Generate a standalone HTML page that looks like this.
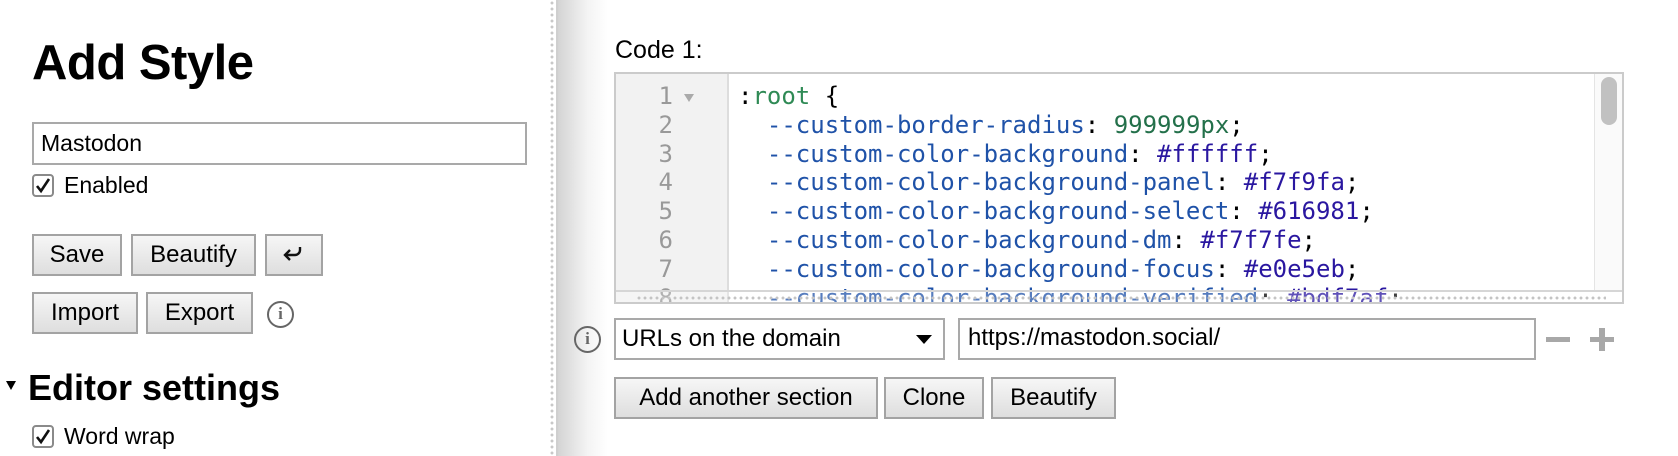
<!DOCTYPE html>
<html><head><meta charset="utf-8"><style>
*{box-sizing:border-box;margin:0;padding:0}
body{width:1678px;height:456px;overflow:hidden;background:#fff;font-family:"Liberation Sans",Arial,sans-serif;color:#000;position:relative}
.a{position:absolute}
.btn{position:absolute;border:2px solid #a3a3a3;background:linear-gradient(#f6f6f6,#dedede);font-size:24px;text-align:center;line-height:38px;white-space:nowrap}
.cb{position:absolute;width:22px;height:23px;border:2px solid #8a8a8a;border-radius:4px;background:#fff}
.lbl{position:absolute;font-size:23px;line-height:26px}
.info{position:absolute;border:2.5px solid #666;border-radius:50%;color:#666;font:bold 17px "Liberation Serif",serif;text-align:center}
.code{font-family:"DejaVu Sans Mono",monospace;font-size:24px;line-height:28.8px;white-space:pre}
.p{color:#1f52a8}.n{color:#23704a}.h{color:#2a17a0}.g{color:#2f8a55}
</style></head><body>
<div class="a" style="left:32px;top:35px;font-size:49px;font-weight:bold;letter-spacing:-0.5px">Add Style</div>
<div class="a" style="left:32px;top:122px;width:495px;height:43px;border:2px solid #a9a9a9;font-size:23px;line-height:38px;padding-left:7px">Mastodon</div>
<div class="cb" style="left:32px;top:174px"><svg width="18" height="19" viewBox="0 0 18 19"><path d="M3 10l4 5 8-12" stroke="#111" stroke-width="2.6" fill="none"/></svg></div>
<div class="lbl" style="left:64px;top:172px">Enabled</div>
<div class="btn" style="left:32px;top:234px;width:90px;height:42px">Save</div>
<div class="btn" style="left:131px;top:234px;width:125px;height:42px">Beautify</div>
<div class="btn" style="left:265px;top:234px;width:58px;height:42px"><svg width="26" height="20" viewBox="0 0 26 20" style="margin-top:8px"><path d="M19 3v3a5 5 0 0 1-5 5H5" stroke="#111" stroke-width="2.4" fill="none"/><path d="M9 6l-5 5 5 5" stroke="#111" stroke-width="2.4" fill="none"/></svg></div>
<div class="btn" style="left:32px;top:292px;width:106px;height:42px">Import</div>
<div class="btn" style="left:146px;top:292px;width:107px;height:42px">Export</div>
<div class="info" style="left:267px;top:301px;width:27px;height:27px;line-height:22px">i</div>
<div class="a" style="left:6px;top:381px;width:0;height:0;border-left:5.5px solid transparent;border-right:5.5px solid transparent;border-top:9px solid #000"></div>
<div class="a" style="left:28px;top:367px;font-size:36px;font-weight:bold">Editor settings</div>
<div class="cb" style="left:32px;top:425px"><svg width="18" height="19" viewBox="0 0 18 19"><path d="M3 10l4 5 8-12" stroke="#111" stroke-width="2.6" fill="none"/></svg></div>
<div class="lbl" style="left:64px;top:423px">Word wrap</div>
<!-- divider -->
<div class="a" style="left:550px;top:0;width:4px;height:456px;background:radial-gradient(circle,#c8c8c8 1.3px,transparent 1.6px) 0 0/4px 6px"></div>
<div class="a" style="left:556px;top:0;width:2px;height:456px;background:#cfcfcf"></div>
<div class="a" style="left:558px;top:0;width:50px;height:456px;background:linear-gradient(90deg,#d4d4d4,#f4f4f4 60%,#fff)"></div>
<!-- right -->
<div class="a" style="left:615px;top:36px;font-size:25px">Code 1:</div>
<div class="a" style="left:614px;top:72px;width:1010px;height:232px;border:2px solid #cbcbcb;overflow:hidden;background:#fff">
 <div class="a" style="left:0;top:0;width:113px;height:230px;background:#f2f2f2;border-right:2px solid #ddd"></div>
 <div class="a code" style="left:0;top:8px;width:57px;text-align:right;color:#999">1
2
3
4
5
6
7
8</div>
 <div class="a" style="left:68px;top:20px;width:0;height:0;border-left:5px solid transparent;border-right:5px solid transparent;border-top:8px solid #aaa"></div>
 <div class="a code" style="left:122px;top:8px">:<span class="g">root</span> {
  <span class="p">--custom-border-radius</span>: <span class="n">999999px</span>;
  <span class="p">--custom-color-background</span>: <span class="h">#ffffff</span>;
  <span class="p">--custom-color-background-panel</span>: <span class="h">#f7f9fa</span>;
  <span class="p">--custom-color-background-select</span>: <span class="h">#616981</span>;
  <span class="p">--custom-color-background-dm</span>: <span class="h">#f7f7fe</span>;
  <span class="p">--custom-color-background-focus</span>: <span class="h">#e0e5eb</span>;
  <span class="p">--custom-color-background-verified</span>: <span class="h">#bdf7af</span>;</div>
 <div class="a" style="left:978px;top:0;width:30px;height:216px;background:#fafafa;border-left:1px solid #e4e4e4"></div>
 <div class="a" style="left:985px;top:3px;width:16px;height:48px;border-radius:8px;background:#c1c1c1"></div>
 <div class="a" style="left:0;top:216px;width:1008px;height:2px;background:#d6d6d6"></div>
 <div class="a" style="left:0;top:218px;width:1008px;height:14px;background:rgba(255,255,255,0.25)"></div>
 <div class="a" style="left:20px;top:222px;width:970px;height:4px;background:radial-gradient(circle,#c4c4c4 1.3px,transparent 1.6px) 0 0/6px 4px"></div>
</div>
<div class="info" style="left:574px;top:326px;width:27px;height:27px;line-height:22px">i</div>
<div class="a" style="left:614px;top:318px;width:331px;height:42px;border:2px solid #a9a9a9;font-size:24px;line-height:38px;padding-left:6px">URLs on the domain</div>
<div class="a" style="left:916px;top:335px;width:0;height:0;border-left:8px solid transparent;border-right:8px solid transparent;border-top:9px solid #000"></div>
<div class="a" style="left:958px;top:318px;width:578px;height:42px;border:2px solid #a9a9a9;font-size:24px;line-height:36px;padding-left:8px">https://mastodon.social/</div>
<div class="a" style="left:1546px;top:337px;width:24px;height:5px;background:#a8a8a8"></div>
<div class="a" style="left:1590px;top:337px;width:24px;height:5px;background:#a8a8a8"></div>
<div class="a" style="left:1599px;top:328px;width:6px;height:23px;background:#a8a8a8"></div>
<div class="btn" style="left:614px;top:377px;width:264px;height:42px">Add another section</div>
<div class="btn" style="left:884px;top:377px;width:100px;height:42px">Clone</div>
<div class="btn" style="left:991px;top:377px;width:125px;height:42px">Beautify</div>
</body></html>
